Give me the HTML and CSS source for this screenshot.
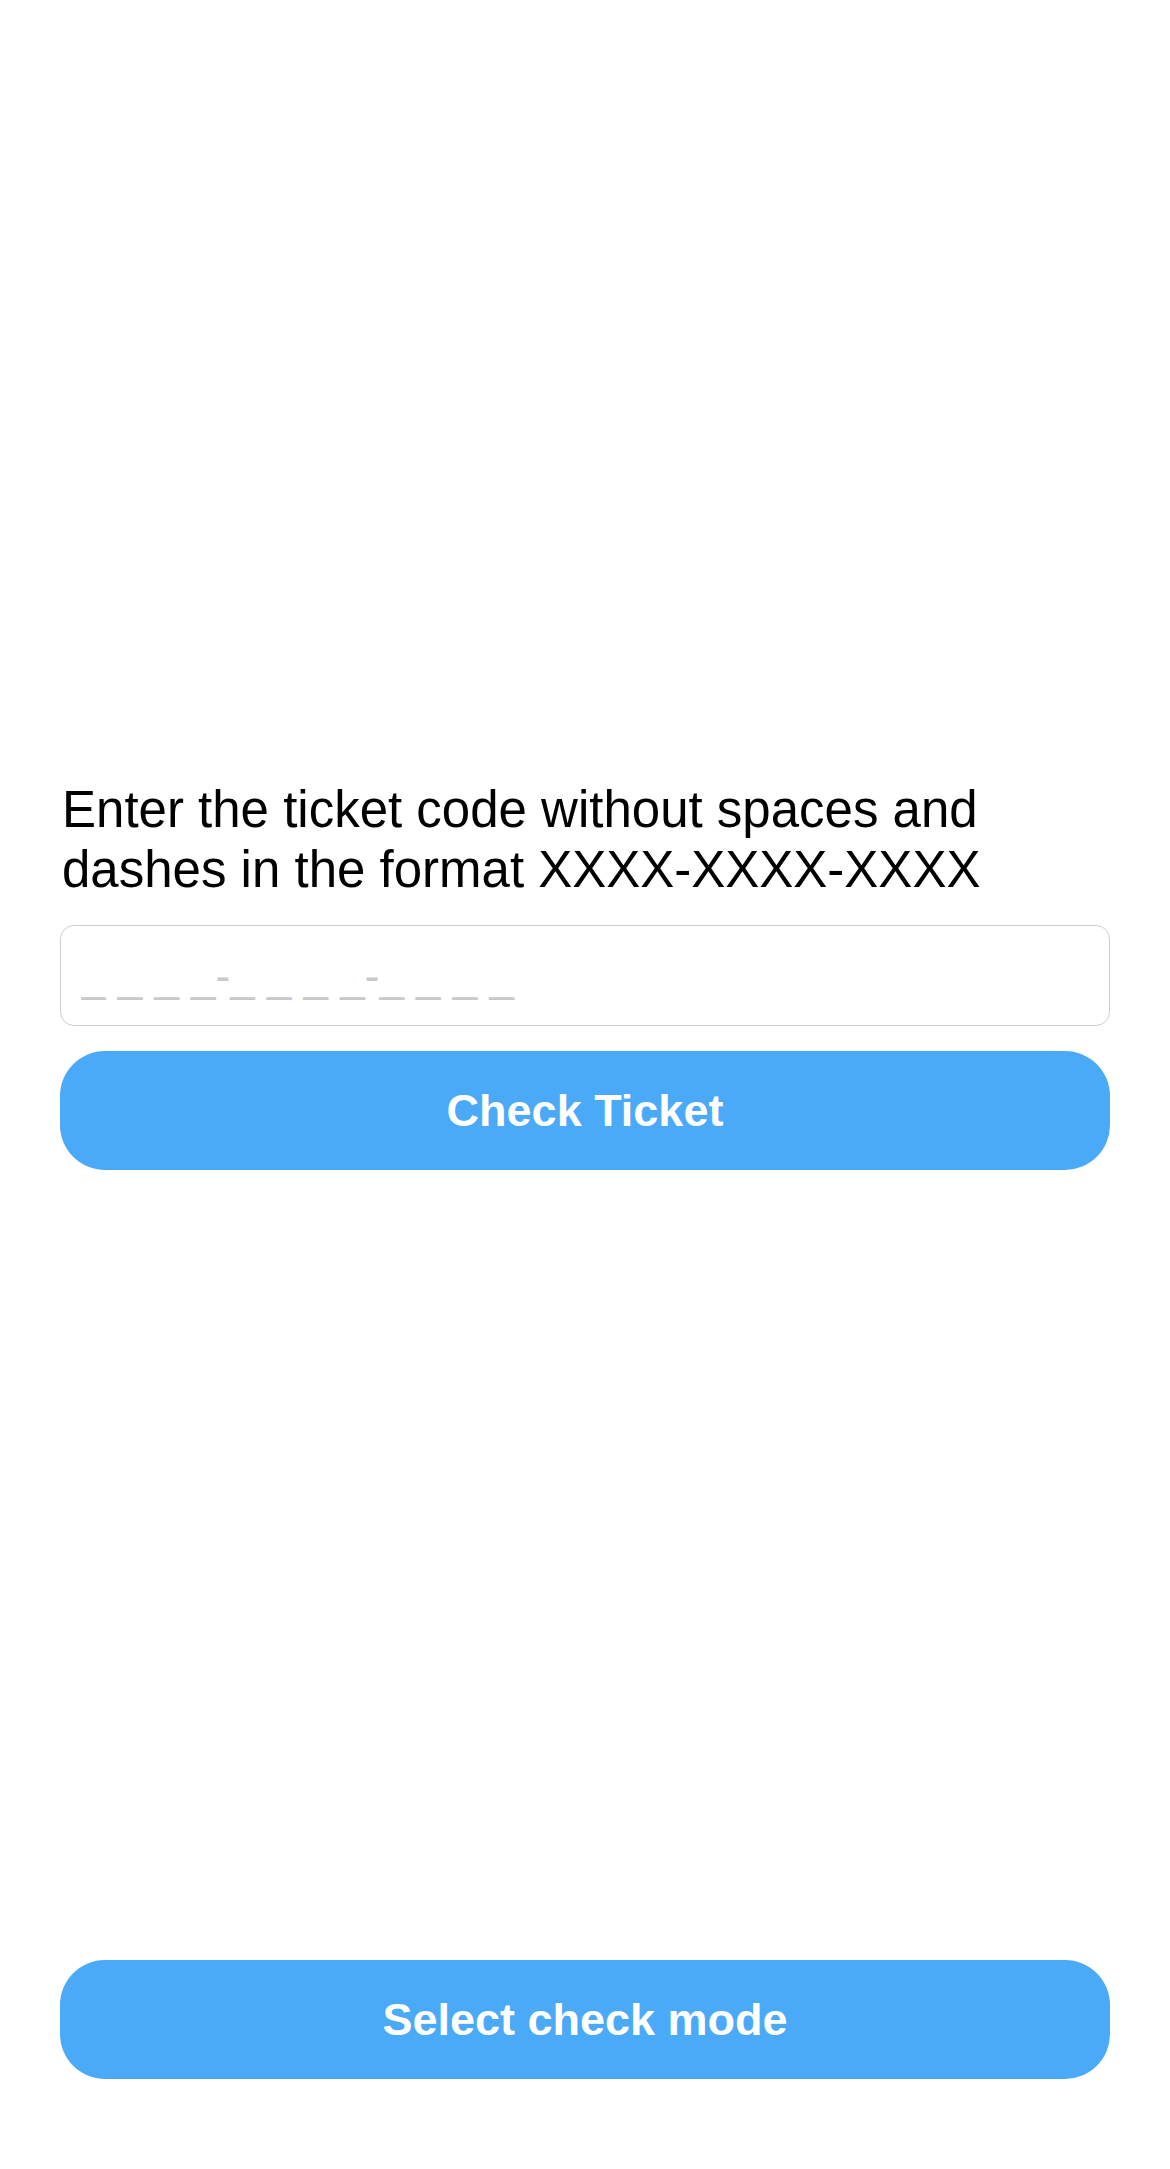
FILE: index.html
```html
<!DOCTYPE html>
<html lang="en">
<head>
<meta charset="utf-8">
<title>Check Ticket</title>
<link rel="stylesheet" href="styles.css">
</head>
<body>
<div class="screen">
  <section class="form">
    <p class="label">Enter the ticket code without spaces and dashes in the format XXXX-XXXX-XXXX</p>
    <input class="code-input" type="text" placeholder="_ _ _ _-_ _ _ _-_ _ _ _">
    <button class="btn" type="button">Check Ticket</button>
  </section>
  <footer class="footer">
    <button class="btn" type="button">Select check mode</button>
  </footer>
</div>
</body>
</html>
```

FILE: styles.css
```css
html, body {
  margin: 0;
  padding: 0;
  background: #ffffff;
}

.screen {
  box-sizing: border-box;
  height: 2169px;
  padding: 0 60px 90px;
  display: flex;
  flex-direction: column;
  font-family: "Liberation Sans", Arial, sans-serif;
}

.form {
  padding-top: 780px;
  display: flex;
  flex-direction: column;
}

.label {
  margin: 0;
  font-size: 51px;
  line-height: 60px;
  color: #000000;
  padding-left: 2px;
}

.code-input {
  box-sizing: border-box;
  margin-top: 25px;
  height: 101px;
  width: 100%;
  border: 1px solid #cdcdcd;
  border-radius: 14px;
  padding: 0 20px;
  font-family: "Liberation Sans", Arial, sans-serif;
  font-size: 44px;
  color: #000000;
  background: #ffffff;
  outline: none;
}

.code-input::placeholder {
  color: #c9c9c9;
}

.btn {
  box-sizing: border-box;
  width: 100%;
  height: 119px;
  border: none;
  border-radius: 45px;
  background: #4aaaf7;
  color: #ffffff;
  font-family: "Liberation Sans", Arial, sans-serif;
  font-weight: bold;
  font-size: 45px;
  padding: 0;
  margin-top: 25px;
}

.footer {
  margin-top: auto;
}
```
